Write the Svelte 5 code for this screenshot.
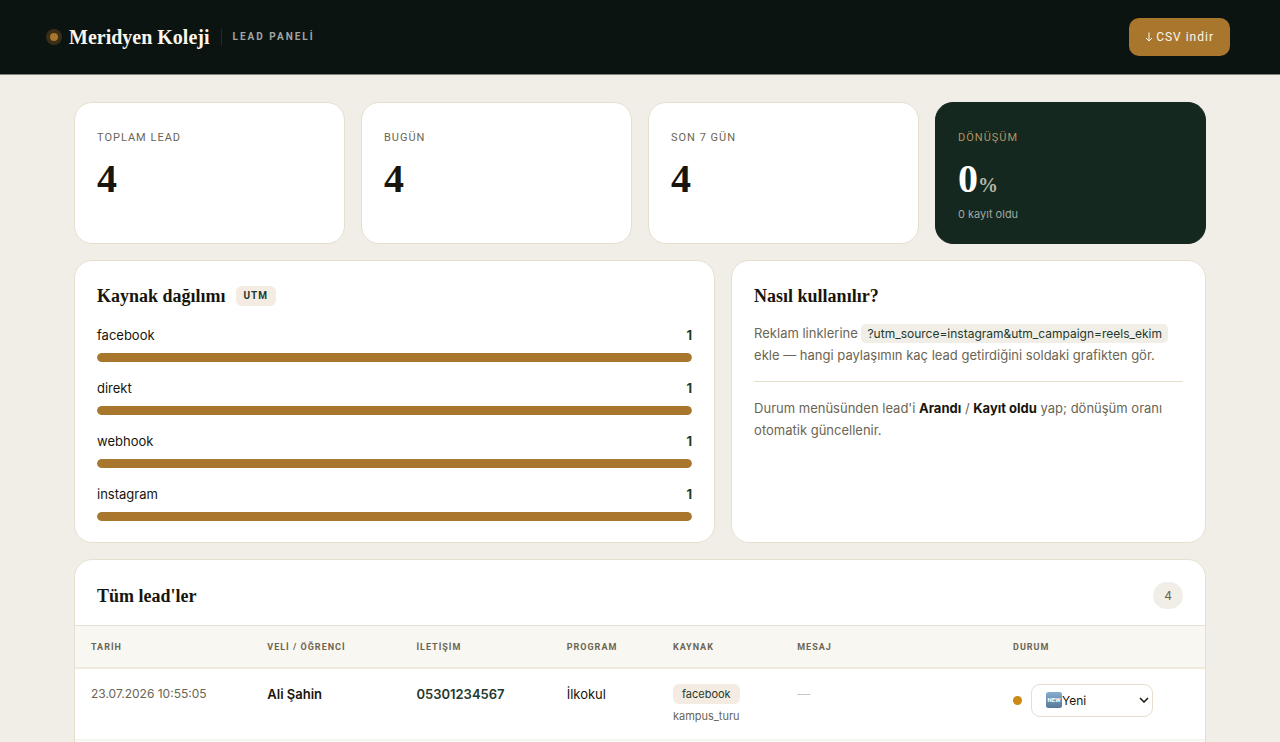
<script lang="ts">
  interface Stat {
    label: string
    value: number
    unit?: string
    note?: string
  }

  interface Source {
    name: string
    count: number
  }

  interface Lead {
    date: string
    name: string
    phone: string
    program: string
    source: string
    campaign: string
    message: string
    status: string
  }

  const stats: Stat[] = [
    { label: 'Toplam lead', value: 4 },
    { label: 'Bugün', value: 4 },
    { label: 'Son 7 gün', value: 4 },
    { label: 'Dönüşüm', value: 0, unit: '%', note: '0 kayıt oldu' },
  ]

  const sources: Source[] = [
    { name: 'facebook', count: 1 },
    { name: 'direkt', count: 1 },
    { name: 'webhook', count: 1 },
    { name: 'instagram', count: 1 },
  ]

  const columns = ['Tarih', 'Veli / Öğrenci', 'İletişim', 'Program', 'Kaynak', 'Mesaj', 'Durum']
  const statuses = ['Yeni', 'Arandı', 'Kayıt oldu']

  let leads: Lead[] = $state([
    {
      date: '23.07.2026 10:55:05',
      name: 'Ali Şahin',
      phone: '05301234567',
      program: 'İlkokul',
      source: 'facebook',
      campaign: 'kampus_turu',
      message: '',
      status: 'Yeni',
    },
  ])

  const total = $derived(sources.reduce((sum, s) => sum + s.count, 0))
  const maxCount = $derived(Math.max(...sources.map((s) => s.count)))
</script>

<header class="topbar" lang="tr">
  <div class="brand">
    <span class="dot"></span>
    <h1>Meridyen Koleji</h1>
    <span class="sub">Lead paneli</span>
  </div>
  <button type="button" class="export">
    <svg width="8" height="10" viewBox="0 0 8 10" aria-hidden="true">
      <path d="M4 0.5V9M1 6L4 9L7 6" />
    </svg>
    CSV indir
  </button>
</header>

<main lang="tr">
  <section class="stats" aria-label="Özet">
    {#each stats as stat}
      <div class="card stat" class:dark={stat.note}>
        <span class="label">{stat.label}</span>
        <div class="value">{stat.value}{#if stat.unit}<small>{stat.unit}</small>{/if}</div>
        {#if stat.note}<p class="note">{stat.note}</p>{/if}
      </div>
    {/each}
  </section>

  <div class="panels">
    <section class="card panel">
      <h2>Kaynak dağılımı <span class="tag">UTM</span></h2>
      <ul class="sources">
        {#each sources as source}
          <li>
            <div class="row"><span>{source.name}</span><b>{source.count}</b></div>
            <div class="track"><div class="fill" style="width: {(source.count / maxCount) * 100}%"></div></div>
          </li>
        {/each}
      </ul>
    </section>

    <section class="card panel">
      <h2>Nasıl kullanılır?</h2>
      <p class="help">
        Reklam linklerine <code>?utm_source=instagram&amp;utm_campaign=reels_ekim</code> ekle — hangi
        paylaşımın kaç lead getirdiğini soldaki grafikten gör.
      </p>
      <p class="help divided">
        Durum menüsünden lead'i <strong>Arandı</strong> / <strong>Kayıt oldu</strong> yap; dönüşüm oranı
        otomatik güncellenir.
      </p>
    </section>
  </div>

  <section class="card leads">
    <div class="leads-head">
      <h2>Tüm lead'ler</h2>
      <span class="count">{total}</span>
    </div>
    <table>
      <colgroup>
        <col class="c-date" /><col class="c-name" /><col class="c-phone" /><col class="c-program" />
        <col class="c-source" /><col class="c-message" /><col />
      </colgroup>
      <thead>
        <tr>
          {#each columns as column}<th scope="col">{column}</th>{/each}
        </tr>
      </thead>
      <tbody>
        {#each leads as lead}
          <tr>
            <td class="date">{lead.date}</td>
            <td class="name">{lead.name}</td>
            <td><a href="tel:{lead.phone}">{lead.phone}</a></td>
            <td>{lead.program}</td>
            <td>
              <span class="pill">{lead.source}</span>
              {#if lead.campaign}<div class="campaign">{lead.campaign}</div>{/if}
            </td>
            <td class="message">{lead.message || '—'}</td>
            <td>
              <div class="status">
                <span class="status-dot"></span>
                <div class="picker">
                  <select bind:value={lead.status} aria-label="Durum">
                    {#each statuses as status}<option>{status}</option>{/each}
                  </select>
                  {#if lead.status === 'Yeni'}
                    <svg class="new" width="16" height="16" viewBox="0 0 16 16" aria-hidden="true">
                      <defs>
                        <linearGradient id="new-bg" x1="0" y1="0" x2="0" y2="1">
                          <stop offset="0" stop-color="#85add0" />
                          <stop offset="1" stop-color="#587896" />
                        </linearGradient>
                      </defs>
                      <rect width="16" height="16" rx="2.5" fill="url(#new-bg)" />
                      <text x="8" y="10" text-anchor="middle">NEW</text>
                    </svg>
                  {/if}
                  <svg class="chevron" width="10" height="6" viewBox="0 0 10 6" aria-hidden="true">
                    <path d="M1 1L5 5L9 1" />
                  </svg>
                </div>
              </div>
            </td>
          </tr>
        {/each}
      </tbody>
    </table>
  </section>
</main>

<style>
  :global(body) {
    margin: 0;
    background: #f1eee7;
    color: #17150c;
    font: 13px/20px Inter, 'Noto Sans', sans-serif;
  }

  h1,
  h2,
  p,
  ul {
    margin: 0;
    padding: 0;
  }

  h1,
  h2,
  .value {
    font-family: 'Liberation Serif', serif;
    font-weight: 700;
  }

  .topbar {
    display: flex;
    align-items: center;
    justify-content: space-between;
    padding: 18px 50px;
    background: #0b1410;
    border-bottom: 1px solid #7e817c;
  }

  .brand {
    display: flex;
    align-items: center;
    gap: 11px;
  }

  .dot {
    width: 8px;
    height: 8px;
    border-radius: 50%;
    background: #a9762d;
    box-shadow: 0 0 0 4px #3a2e19;
  }

  h1 {
    color: #faf7ef;
    font-size: 20px;
    line-height: 24px;
  }

  .sub {
    padding-left: 11px;
    border-left: 1px solid #252d29;
    color: #a2a5a0;
    font: 700 10px/16px Roboto, sans-serif;
    letter-spacing: 2px;
    text-transform: uppercase;
  }

  .export {
    display: flex;
    align-items: center;
    gap: 3px;
    height: 38px;
    padding: 0 16px;
    border: 0;
    border-radius: 10px;
    background: #a9762d;
    color: #faf7ef;
    font: 400 12px/16px Roboto, sans-serif;
    letter-spacing: 1px;
    cursor: pointer;
  }

  .export svg,
  .chevron {
    fill: none;
    stroke: currentColor;
  }

  main {
    display: flex;
    flex-direction: column;
    gap: 16px;
    max-width: 1132px;
    margin: 0 auto;
    padding: 27px 28px 48px;
  }

  .card {
    box-sizing: border-box;
    background: #fff;
    border: 1px solid #e6dfce;
    border-radius: 18px;
  }

  .stats {
    display: grid;
    grid-template-columns: repeat(4, 1fr);
    gap: 16px;
  }

  .stat {
    min-height: 142px;
    padding: 27px 22px 18px;
  }

  .label {
    display: block;
    color: #6b6554;
    font: 400 11px/16px Roboto, sans-serif;
    letter-spacing: 1px;
    text-transform: uppercase;
  }

  .value {
    margin-top: 13px;
    font-size: 40px;
    line-height: 40px;
  }

  .value small {
    color: #b0b6b0;
    font-size: 20px;
    line-height: 20px;
  }

  .note {
    margin-top: 7px;
    color: #a1a9a4;
    font-size: 11px;
    line-height: 16px;
  }

  .dark {
    background: #14281f;
    border-color: #14281f;
    color: #fff;
  }

  .dark .label {
    color: #b39461;
  }

  .panels {
    display: grid;
    grid-template-columns: 1.35fr 1fr;
    gap: 16px;
  }

  .panel {
    padding: 24px 22px 21px;
  }

  h2 {
    display: flex;
    align-items: center;
    gap: 10px;
    font-size: 18px;
    line-height: 22px;
  }

  .tag {
    padding: 2px 8px;
    border-radius: 6px;
    background: #f4ebe3;
    color: #1f3a2e;
    font: 700 10px/16px Roboto, sans-serif;
    letter-spacing: 1px;
  }

  .sources {
    display: grid;
    gap: 16px;
    margin-top: 18px;
    list-style: none;
  }

  .row {
    display: flex;
    justify-content: space-between;
    margin-bottom: 8px;
  }

  .row b {
    color: #1f3a2e;
  }

  .track {
    height: 9px;
    border-radius: 6px;
    background: #f1eee7;
    overflow: hidden;
  }

  .fill {
    height: 100%;
    border-radius: 6px;
    background: #a9762d;
  }

  .help {
    margin-top: 15px;
    color: #6b6554;
    line-height: 22px;
  }

  .help strong {
    color: #17150c;
  }

  .help code {
    padding: 2px 6px;
    border-radius: 5px;
    background: #f1eee7;
    color: #1f3a2e;
    font: 400 12px/14px Inter, sans-serif;
  }

  .divided {
    padding-top: 15px;
    border-top: 1px solid #e6dfce;
  }

  .leads {
    min-height: 240px;
    overflow: hidden;
  }

  .leads-head {
    display: flex;
    align-items: center;
    justify-content: space-between;
    padding: 22px 22px 16px;
  }

  .count {
    padding: 4px 11px;
    border-radius: 20px;
    background: #f1eee7;
    color: #6b6554;
    font-size: 12px;
    line-height: 19px;
  }

  table {
    width: 100%;
    table-layout: fixed;
    border-collapse: collapse;
    text-align: left;
  }

  .c-date { width: 15.6%; }
  .c-name { width: 13.2%; }
  .c-phone { width: 13.3%; }
  .c-program { width: 9.4%; }
  .c-source { width: 11%; }
  .c-message { width: 19.1%; }

  th {
    padding: 14px 16px 13px;
    border-top: 1px solid #e6dfce;
    border-bottom: 2px solid #f0ebdd;
    background: #f9f7f1;
    color: #6b6554;
    font: 700 9px/14px Roboto, sans-serif;
    letter-spacing: 1px;
    text-transform: uppercase;
  }

  td {
    padding: 15px 16px;
    border-bottom: 2px solid #f5f4ef;
    vertical-align: top;
  }

  .date {
    color: #6b6554;
    font-size: 12px;
  }

  .name,
  td a {
    font-weight: 600;
  }

  td a {
    color: #1f3a2e;
    text-decoration: none;
  }

  .pill {
    display: inline-block;
    padding: 0 9px;
    border-radius: 6px;
    background: #f4ebe3;
    color: #1f3a2e;
    font-size: 11px;
    vertical-align: top;
  }

  .campaign {
    margin-top: 4px;
    color: #6b6554;
    font-size: 11px;
    line-height: 16px;
  }

  .message {
    color: #c9c5b9;
  }

  .status {
    display: flex;
    align-items: center;
    gap: 9px;
  }

  .status-dot {
    width: 9px;
    height: 9px;
    border-radius: 50%;
    background: #cc8917;
  }

  .picker {
    position: relative;
  }

  select {
    appearance: none;
    display: block;
    width: 122px;
    height: 33px;
    padding: 0 20px 0 30px;
    border: 1px solid #e6dfce;
    border-radius: 9px;
    background: #fff;
    color: #17150c;
    font: 400 12px/16px Inter, sans-serif;
  }

  .new {
    position: absolute;
    left: 15px;
    top: 8px;
    pointer-events: none;
  }

  .new text {
    fill: #fff;
    font: 700 6px Roboto, sans-serif;
  }

  .chevron {
    position: absolute;
    right: 4px;
    top: 13px;
    stroke-width: 1.5;
    pointer-events: none;
  }
</style>
